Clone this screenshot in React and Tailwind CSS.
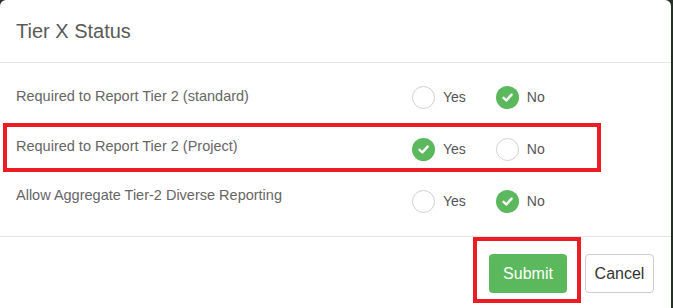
function Radio({ checked }) {
  if (checked) {
    return (
      <span className="flex h-[23px] w-[23px] items-center justify-center rounded-full bg-[#5cb85c]">
        <svg width="13" height="13" viewBox="0 0 13 13" fill="none">
          <path d="M2.5 6.8 L5.3 9.4 L10.6 3.6" stroke="#fff" strokeWidth="2.4" strokeLinecap="round" strokeLinejoin="round" />
        </svg>
      </span>
    );
  }
  return <span className="h-[23px] w-[23px] rounded-full border border-[#d4d0cc] bg-white" />;
}

function Choice({ label, checked }) {
  return (
    <div className="flex items-center gap-[8px]">
      <Radio checked={checked} />
      <span className="text-[14px] text-[#555]">{label}</span>
    </div>
  );
}

function Row({ label, value, shift = "" }) {
  return (
    <div className="flex h-[52px] items-center pl-4">
      <div className={`w-[396px] text-[14.5px] text-[#666] ${shift}`}>{label}</div>
      <div className="flex items-center gap-[30px]">
        <Choice label="Yes" checked={value === "yes"} />
        <Choice label="No" checked={value === "no"} />
      </div>
    </div>
  );
}

export default function App() {
  return (
    <div className="flex h-[308px] w-[673px] bg-[#263126] font-['Liberation_Sans',Arial,sans-serif]">
      <div className="relative flex h-full w-[671px] flex-col rounded-t-[6px] bg-white">
        <div className="flex h-[63px] items-center border-b border-[#e5e5e5] px-4">
          <h4 className="text-[20px] text-[#5a5a5a]">Tier X Status</h4>
        </div>
        <div className="pt-[8px] pb-[9px]">
          <Row label="Required to Report Tier 2 (standard)" value="no" />
          <Row label="Required to Report Tier 2 (Project)" value="yes" shift="-mt-[5px]" />
          <Row label="Allow Aggregate Tier-2 Diverse Reporting" value="no" shift="-mt-[11px]" />
        </div>
        <div className="flex flex-1 items-start justify-end gap-[18px] border-t border-[#e5e5e5] pt-[17px] pr-[17px]">
          <button className="h-[39px] w-[78px] rounded-[4px] bg-[#5cb85c] text-[16px] text-white">Submit</button>
          <button className="h-[39px] w-[69px] rounded-[4px] border border-[#ccc] bg-white text-[16px] text-[#333]">Cancel</button>
        </div>

        <div className="pointer-events-none absolute left-[3px] top-[123px] h-[49px] w-[598px] border-[4px] border-[#ed1c24]" />
        <div className="pointer-events-none absolute left-[473px] top-[237px] h-[66px] w-[108px] border-[4px] border-[#ed1c24]" />
      </div>
    </div>
  );
}
